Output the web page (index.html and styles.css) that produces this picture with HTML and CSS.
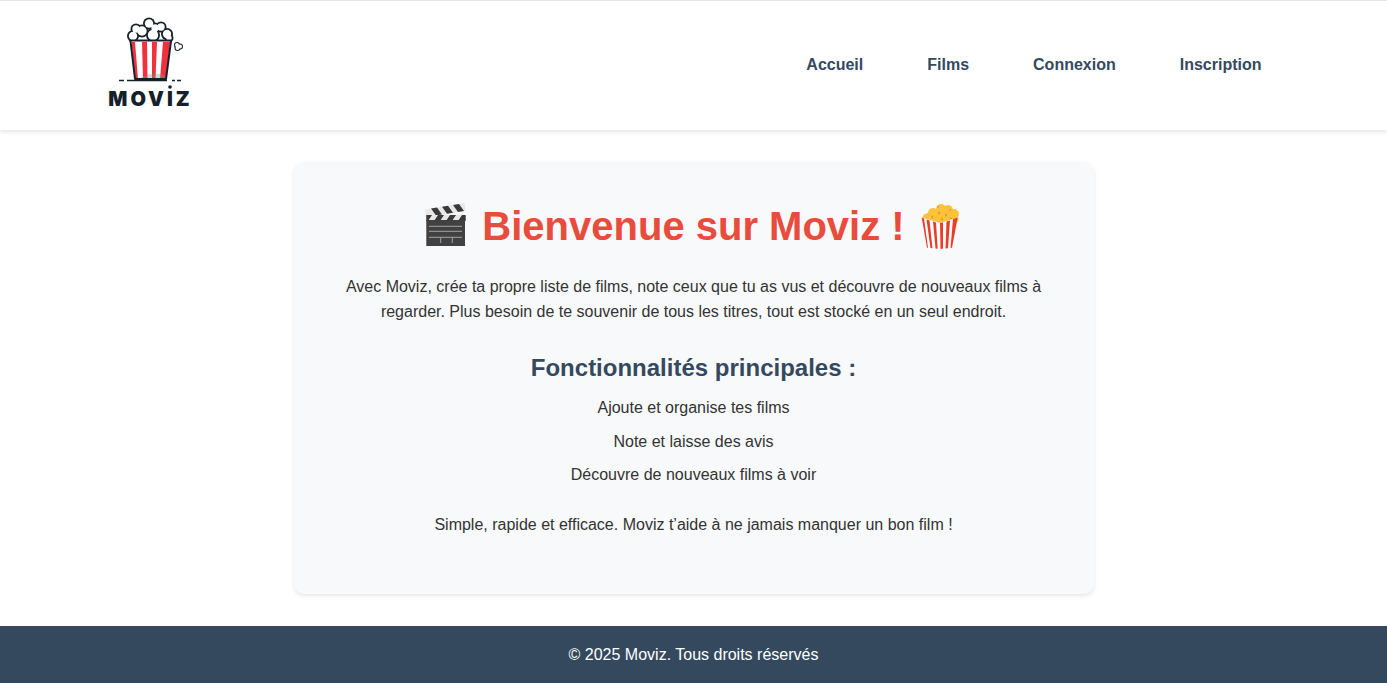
FILE: index.html
```html
<!DOCTYPE html>
<html lang="fr">
<head>
  <meta charset="UTF-8" />
  <meta name="viewport" content="width=device-width, initial-scale=1.0"/>
  <title>Moviz</title>
  <link rel="stylesheet" href="styles.css">
</head>
<body>

  <header class="site-header">
    <a class="logo" href="#">
      <svg width="120" height="129" viewBox="0 0 120 129">
        <!-- popcorn: dark discs behind white ones make one bumpy outline -->
        <g fill="#14202a">
          <circle cx="43" cy="35" r="6"/>
          <circle cx="46" cy="28" r="5.500"/>
          <circle cx="52" cy="30" r="6.500"/>
          <circle cx="59" cy="22.500" r="6"/>
          <circle cx="65" cy="27" r="5.500"/>
          <circle cx="71" cy="26" r="5.500"/>
          <circle cx="77" cy="33" r="6"/>
          <circle cx="79" cy="37" r="4.500"/>
          <circle cx="63" cy="34" r="7"/>
          <circle cx="87" cy="44" r="3"/>
          <circle cx="90" cy="45.500" r="3"/>
          <circle cx="87.500" cy="47" r="3"/>
        </g>
        <g fill="#fff">
          <circle cx="43" cy="35" r="4.200"/>
          <circle cx="46" cy="28" r="3.700"/>
          <circle cx="52" cy="30" r="4.700"/>
          <circle cx="59" cy="22.500" r="4.200"/>
          <circle cx="65" cy="27" r="3.700"/>
          <circle cx="71" cy="26" r="3.700"/>
          <circle cx="77" cy="33" r="4.200"/>
          <circle cx="79" cy="37" r="2.700"/>
          <circle cx="63" cy="34" r="5.200"/>
          <circle cx="87" cy="44" r="2"/>
          <circle cx="90" cy="45.500" r="2"/>
          <circle cx="87.500" cy="47" r="2"/>
        </g>
        <!-- bucket -->
        <path d="M40.500 40 L81 40 L76 78 L45 78 Z" fill="#fff"/>
        <path d="M41.500 41 L45 41 L48 78 L45 78 Z M52 41 L57 41 L57.500 78 L53 78 Z M62 41 L67 41 L65.500 78 L62 78 Z M73 41 L80 41 L76 78 L70 78 Z" fill="#f0323f"/>
        <path d="M47 78 Q62 70 75 74 L75 78 Z" fill="#8a8a8a" opacity="0.35"/>
        <path d="M39.500 39.500 H82" stroke="#14202a" stroke-width="2"/>
        <path d="M40.500 40 L45 78 L76 78 L81 40" fill="none" stroke="#14202a" stroke-width="2" stroke-linejoin="round"/>
        <path d="M29 79.500 H34 M37 79.500 H77 M82 79.500 H85 M87 79.500 H91" stroke="#14202a" stroke-width="1.600"/>
        <circle cx="80" cy="86" r="1.800" fill="#14202a"/>
        <text class="logo-text" x="60.500" y="105" text-anchor="middle">MOVIZ</text>
      </svg>
    </a>
    <nav class="main-nav">
      <a href="#">Accueil</a>
      <a href="#">Films</a>
      <a href="#">Connexion</a>
      <a href="#">Inscription</a>
    </nav>
  </header>

  <main class="welcome-card">
    <h1>
      <svg class="emoji" viewBox="0 0 48 48">
        <path d="M2 8.500 L41.700 2 L42.700 10 L3 16.500 Z" fill="#e8e8e8"/>
        <path d="M8 7.500 L14 6.500 L19 13.500 L13 14.500 Z M19 5.700 L25 4.700 L30 11.700 L24 12.700 Z M30 4 L36 3 L41 10 L35 11 Z" fill="#3a3a3a"/>
        <rect x="3.300" y="14" width="39.400" height="6" fill="#e8e8e8"/>
        <path d="M3.300 14 H9 L5 20 H3.300 Z M15 14 H21 L17 20 H11 Z M27 14 H33 L29 20 H23 Z M39 14 H42.700 V20 H35 Z" fill="#3a3a3a"/>
        <rect x="3.300" y="19" width="38.700" height="26" fill="#414141"/>
        <path d="M6 25.300 H39 M6 30.300 H39 M6 36.300 H39 M17.700 36.300 V42 M29.300 36.300 V42" stroke="#a3a3a3" stroke-width="1"/>
      </svg>
      Bienvenue sur Moviz !
      <svg class="emoji" viewBox="-5 0 48 48">
        <g fill="#fdc23c">
          <circle cx="6" cy="17" r="4.500"/>
          <circle cx="12" cy="12" r="5"/>
          <circle cx="20" cy="8" r="5"/>
          <circle cx="27" cy="9" r="5"/>
          <circle cx="33" cy="13" r="5"/>
          <circle cx="33" cy="18" r="4.500"/>
          <rect x="6" y="12" width="27" height="11"/>
        </g>
        <g fill="#ee9a2c">
          <circle cx="11" cy="16" r="1.200"/>
          <circle cx="18" cy="12" r="1.200"/>
          <circle cx="25" cy="14" r="1.200"/>
          <circle cx="30" cy="18" r="1.200"/>
          <circle cx="21" cy="18" r="1.200"/>
          <circle cx="17" cy="6" r="1"/>
          <circle cx="29" cy="9" r="1"/>
        </g>
        <path d="M0.700 16.500 L19 22 L36.700 16.500 L31 46.700 L19 48 L6 46.700 Z" fill="#fff"/>
        <path d="M0.700 16.500 L3 17.500 L7 46.800 L6 46.700 Z M5.500 18.500 L8.500 19.500 L11.500 47.200 L9.500 47 Z M12 20.500 L15 21.500 L16.700 47.700 L14.500 47.500 Z M19 22 L22 21.500 L22 47.700 L19.500 47.800 Z M25.500 20.500 L29 19.500 L27 47.200 L24.500 47.500 Z M32 18 L36.700 16.500 L31 46.700 L29.500 47 Z" fill="#ea3c28"/>
      </svg>
    </h1>
    <p class="intro">Avec Moviz, crée ta propre liste de films, note ceux que tu as vus et découvre de nouveaux films à regarder. Plus besoin de te souvenir de tous les titres, tout est stocké en un seul endroit.</p>
    <h2>Fonctionnalités principales :</h2>
    <ul class="features">
      <li>Ajoute et organise tes films</li>
      <li>Note et laisse des avis</li>
      <li>Découvre de nouveaux films à voir</li>
    </ul>
    <p>Simple, rapide et efficace. Moviz t’aide à ne jamais manquer un bon film !</p>
  </main>

  <footer class="site-footer">© 2025 Moviz. Tous droits réservés</footer>

</body>
</html>
```

FILE: styles.css
```css
body {
  margin: 0;
  font-family: "Liberation Sans", Arial, sans-serif;
  font-size: 16px;
  line-height: 1.6;
  color: #333;
  background-color: #fff;
}

a {
  text-decoration: none;
}

.site-header {
  display: flex;
  justify-content: space-between;
  align-items: center;
  height: 130px;
  box-sizing: border-box;
  padding: 0 125.5px 0 90px;
  border-top: 1px solid #e5e5e5;
  background-color: #fff;
  box-shadow: 0 2px 4px rgba(0, 0, 0, 0.1);
}

.logo {
  display: flex;
}

.logo-text {
  font-family: "Inter", "Liberation Sans", sans-serif;
  font-size: 20px;
  font-weight: 900;
  letter-spacing: 3px;
  fill: #14202a;
}

.main-nav {
  display: flex;
  gap: 64px;
  margin-bottom: 2px;
}

.main-nav a {
  font-weight: bold;
  color: #34495e;
}

.welcome-card {
  width: 800px;
  box-sizing: border-box;
  margin: 32px auto;
  padding: 32px 40px;
  height: 432px;
  text-align: center;
  background-color: #f8f9fa;
  border-radius: 10px;
  box-shadow: 0 2px 4px rgba(0, 0, 0, 0.1);
}

h1 {
  margin: 0 0 15.6px;
  font-size: 40px;
  color: #e74c3c;
}

.emoji {
  width: 48px;
  height: 48px;
  vertical-align: -9px;
}

p {
  margin: 0 0 24px;
}

.intro {
  margin-bottom: 24.4px;
}

h2 {
  margin: 0 0 7.6px;
  font-size: 24px;
  color: #34495e;
}

.features {
  list-style: none;
  margin: 0 0 24.4px;
  padding: 0;
}

.features li {
  margin-bottom: 8px;
}

.site-footer {
  padding: 16px;
  text-align: center;
  color: #fff;
  background-color: #34495e;
}
```
